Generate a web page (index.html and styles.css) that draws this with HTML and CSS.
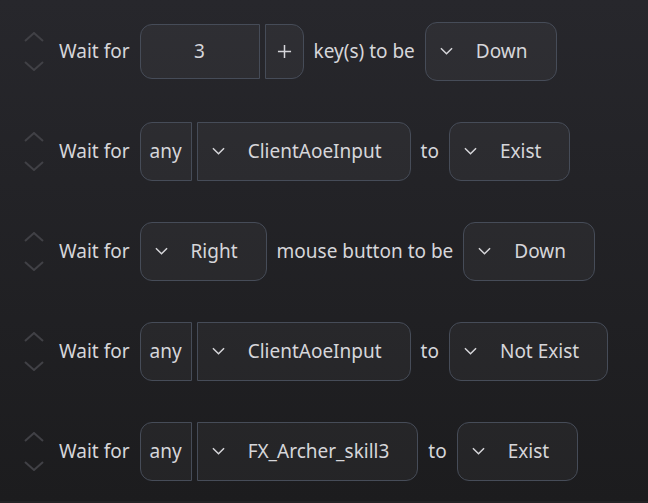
FILE: index.html
```html
<!DOCTYPE html>
<html>
<head>
<meta charset="utf-8">
<link rel="stylesheet" href="styles.css">
</head>
<body>
<div class="list">
  <div class="row">
    <div class="mover">
      <svg class="chev" viewBox="0 0 20 10"><path d="M1 9 L10 1 L19 9"/></svg>
      <svg class="chev" viewBox="0 0 20 10"><path d="M1 1 L10 9 L19 1"/></svg>
    </div>
    <span class="label">Wait for</span>
    <div class="group">
      <div class="box num">3</div>
      <div class="box plus"><svg viewBox="0 0 16 16"><path d="M8 1 V15 M1 8 H15"/></svg></div>
    </div>
    <span class="label">key(s) to be</span>
    <div class="box drop"><svg class="dchev" viewBox="0 0 14 8"><path d="M1 1 L7 7 L13 1"/></svg><span>Down</span></div>
  </div>

  <div class="row">
    <div class="mover">
      <svg class="chev" viewBox="0 0 20 10"><path d="M1 9 L10 1 L19 9"/></svg>
      <svg class="chev" viewBox="0 0 20 10"><path d="M1 1 L10 9 L19 1"/></svg>
    </div>
    <span class="label">Wait for</span>
    <div class="group">
      <div class="box any">any</div>
      <div class="box drop right"><svg class="dchev" viewBox="0 0 14 8"><path d="M1 1 L7 7 L13 1"/></svg><span>ClientAoeInput</span></div>
    </div>
    <span class="label">to</span>
    <div class="box drop"><svg class="dchev" viewBox="0 0 14 8"><path d="M1 1 L7 7 L13 1"/></svg><span>Exist</span></div>
  </div>

  <div class="row">
    <div class="mover">
      <svg class="chev" viewBox="0 0 20 10"><path d="M1 9 L10 1 L19 9"/></svg>
      <svg class="chev" viewBox="0 0 20 10"><path d="M1 1 L10 9 L19 1"/></svg>
    </div>
    <span class="label">Wait for</span>
    <div class="box drop"><svg class="dchev" viewBox="0 0 14 8"><path d="M1 1 L7 7 L13 1"/></svg><span>Right</span></div>
    <span class="label">mouse button to be</span>
    <div class="box drop"><svg class="dchev" viewBox="0 0 14 8"><path d="M1 1 L7 7 L13 1"/></svg><span>Down</span></div>
  </div>

  <div class="row">
    <div class="mover">
      <svg class="chev" viewBox="0 0 20 10"><path d="M1 9 L10 1 L19 9"/></svg>
      <svg class="chev" viewBox="0 0 20 10"><path d="M1 1 L10 9 L19 1"/></svg>
    </div>
    <span class="label">Wait for</span>
    <div class="group">
      <div class="box any">any</div>
      <div class="box drop right"><svg class="dchev" viewBox="0 0 14 8"><path d="M1 1 L7 7 L13 1"/></svg><span>ClientAoeInput</span></div>
    </div>
    <span class="label">to</span>
    <div class="box drop"><svg class="dchev" viewBox="0 0 14 8"><path d="M1 1 L7 7 L13 1"/></svg><span>Not Exist</span></div>
  </div>

  <div class="row">
    <div class="mover">
      <svg class="chev" viewBox="0 0 20 10"><path d="M1 9 L10 1 L19 9"/></svg>
      <svg class="chev" viewBox="0 0 20 10"><path d="M1 1 L10 9 L19 1"/></svg>
    </div>
    <span class="label">Wait for</span>
    <div class="group">
      <div class="box any">any</div>
      <div class="box drop right"><svg class="dchev" viewBox="0 0 14 8"><path d="M1 1 L7 7 L13 1"/></svg><span>FX_Archer_skill3</span></div>
    </div>
    <span class="label">to</span>
    <div class="box drop"><svg class="dchev" viewBox="0 0 14 8"><path d="M1 1 L7 7 L13 1"/></svg><span>Exist</span></div>
  </div>
</div>
</body>
</html>
```
FILE: styles.css
```css
html {
  background: #232325;
  margin: 0;
  padding: 0;
}
body {
  margin: 0;
  height: 501px;
  background: linear-gradient(to bottom, #27272c 0%, #1c1c1e 100%);
  font-family: "Noto Sans", "Open Sans", sans-serif;
  font-size: 19px;
  color: #d6d6da;
  overflow: hidden;
}
.list {
  display: flex;
  flex-direction: column;
  padding-top: 1px;
}
.row {
  height: 100px;
  display: flex;
  align-items: center;
  gap: 10px;
  padding-left: 24px;
}
.mover {
  width: 20px;
  display: flex;
  flex-direction: column;
  gap: 19px;
  margin-right: 5px;
}
.chev {
  width: 20px;
  height: 10px;
  display: block;
}
.chev path {
  fill: none;
  stroke: #414146;
  stroke-width: 2;
}
.label {
  white-space: nowrap;
}
.group {
  display: flex;
  gap: 5px;
  align-items: center;
}
.box {
  box-sizing: border-box;
  height: 59px;
  border: 1px solid #464c58;
  border-radius: 12px;
  background: rgba(255, 255, 255, 0.04);
  display: flex;
  align-items: center;
  white-space: nowrap;
}
.num {
  width: 120px;
  height: 55px;
  justify-content: center;
  border-radius: 12px 0 0 12px;
}
.plus {
  width: 39px;
  height: 55px;
  justify-content: center;
  border-radius: 0 12px 12px 0;
}
.plus svg {
  width: 15px;
  height: 15px;
}
.plus path {
  fill: none;
  stroke: #d6d6da;
  stroke-width: 1.6;
}
.any {
  padding: 0 9px;
  border-radius: 12px 0 0 12px;
}
.drop {
  padding: 0 28px 0 14px;
  gap: 23px;
}
.drop.right {
  border-radius: 0 12px 12px 0;
}
.dchev {
  width: 13px;
  height: 8px;
  flex: none;
}
.dchev path {
  fill: none;
  stroke: #d6d6da;
  stroke-width: 1.6;
}
```
